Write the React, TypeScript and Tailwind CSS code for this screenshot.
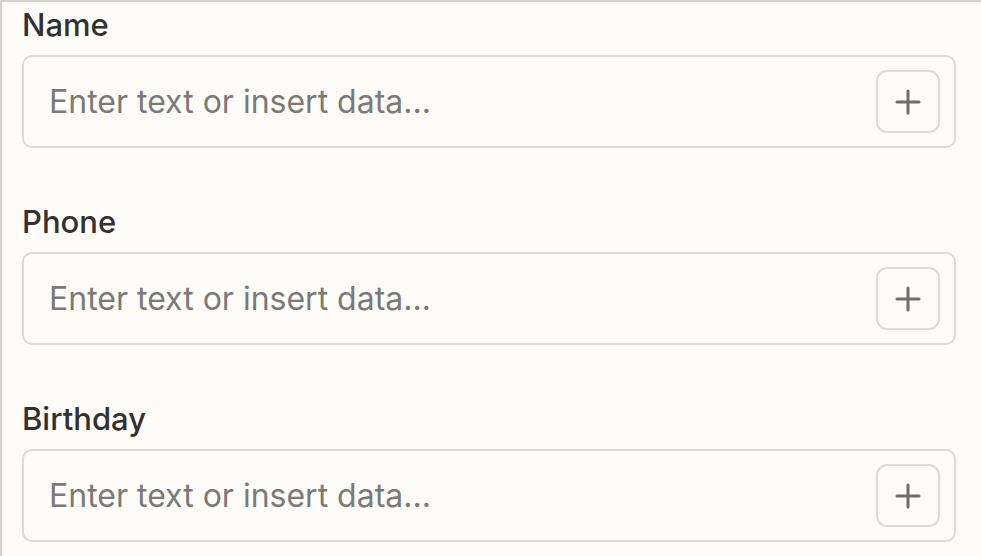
const fields = ['Name', 'Phone', 'Birthday'];

function PlusIcon() {
  return (
    <svg width="26" height="26" viewBox="0 0 26 26" fill="none" stroke="#6f6d6a" strokeWidth="3" strokeLinecap="round">
      <path d="M13 2v22M2 13h22" />
    </svg>
  );
}

function Field({ label }: { label: string }) {
  return (
    <div className="flex flex-col">
      <label className="text-[31px] leading-[36px] font-medium text-[#33312e]">{label}</label>
      <div className="mt-[12px] flex h-[93px] items-center rounded-[10px] border-2 border-[#dedbd4] bg-[#fdfcf9] pl-[25px] pr-[14px]">
        <span className="flex-1 text-[32px] text-[#7c7a76]">Enter text or insert data...</span>
        <button className="flex h-[63px] w-[64px] items-center justify-center rounded-[11px] border-2 border-[#dedbd4] bg-[#fdfcf9]">
          <PlusIcon />
        </button>
      </div>
    </div>
  );
}

export default function App() {
  return (
    <div
      className="h-[556px] w-[981px] overflow-hidden border-l-2 border-t-2 border-[#d6d3cc] bg-[#fdfcf9] pl-[20px] pr-[25px] pt-[5px]"
      style={{ fontFamily: 'Inter, "Noto Sans", sans-serif' }}
    >
      <div className="flex flex-col gap-[56px]">
        {fields.map((f) => (
          <Field key={f} label={f} />
        ))}
      </div>
    </div>
  );
}
